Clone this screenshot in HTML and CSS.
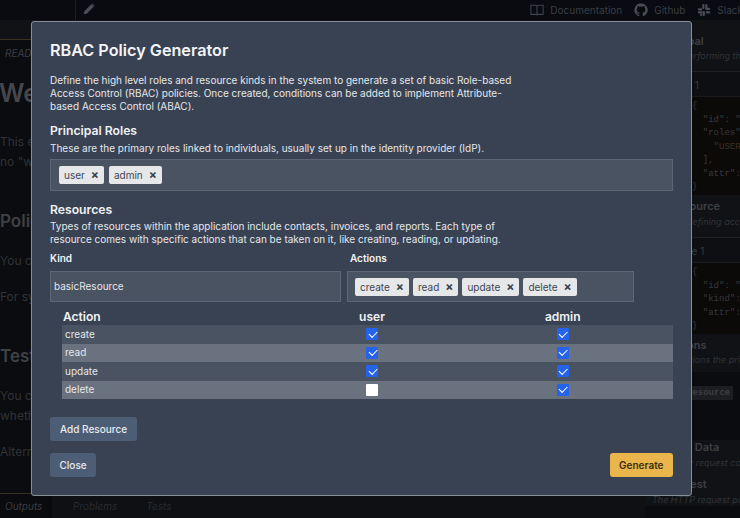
FILE: index.html
```html
<!DOCTYPE html>
<html lang="en">
<head>
<meta charset="utf-8">
<title>RBAC Policy Generator</title>
<link rel="stylesheet" href="styles.css">
</head>
<body>
<div class="app">
  <header class="topbar">
    <div class="brand"></div>
    <svg class="pencil" viewBox="0 0 24 24" width="14" height="14"><path d="M3 21l1-5L16 4l4 4L8 20z M17.500 2.500l4 4-1 1-4-4z" fill="#4b4e54"/></svg>
    <nav class="toplinks">
      <span class="toplink"><svg viewBox="0 0 16 16" width="14" height="14" fill="none" stroke="#3f434a" stroke-width="1.200"><path d="M1 2.500h5.500q1.500 0 1.500 1.500v10q0-1-1.500-1H1zM15 2.500H9.500Q8 2.500 8 4v10q0-1 1.500-1H15z"/></svg>Documentation</span>
      <span class="toplink"><svg viewBox="0 0 16 16" width="14" height="14" fill="#4a4d53"><path d="M8 .5a7.500 7.500 0 0 0-2.400 14.600c.4.100.5-.2.500-.4v-1.300c-2.100.5-2.500-1-2.500-1-.3-.9-.8-1.100-.8-1.100-.7-.5.100-.5.100-.5.700.1 1.100.8 1.100.8.700 1.100 1.700.8 2.100.6.100-.5.300-.8.500-1-1.700-.2-3.400-.8-3.400-3.700 0-.8.300-1.500.8-2-.1-.2-.3-1 .1-2 0 0 .6-.2 2.100.8a7 7 0 0 1 3.800 0c1.500-1 2.100-.8 2.100-.8.400 1 .2 1.800.1 2 .5.500.8 1.200.8 2 0 2.900-1.800 3.500-3.400 3.700.3.200.5.700.5 1.400v2.100c0 .2.100.5.500.4A7.500 7.500 0 0 0 8 .5z"/></svg>Github</span>
      <span class="toplink"><svg viewBox="0 0 16 16" width="14" height="14" fill="#4a4d53"><rect x="6" y="1" width="2.500" height="6" rx="1.200"/><rect x="1" y="6" width="5" height="2.500" rx="1.200"/><rect x="9.500" y="1" width="2.500" height="6" rx="1.200"/><rect x="9.500" y="5.500" width="5.500" height="2.500" rx="1.200"/><rect x="1" y="9.500" width="5.500" height="2.500" rx="1.200"/><rect x="6.500" y="9" width="2.500" height="6" rx="1.200"/><rect x="10" y="9.500" width="5" height="2.500" rx="1.200"/><rect x="3.500" y="12" width="2.500" height="3" rx="1.200"/></svg>Slack</span>
    </nav>
  </header>
  <div class="workspace">
    <main class="readme">
      <div class="tabline"></div>
      <div class="readlabel"><i>READ</i></div>
      <div class="doc">
        <h1>Welcome</h1>
        <p class="tight">This example</p>
        <p>no "workflow"</p>
        <h2>Policies</h2>
        <p>You can</p>
        <p>For syntax</p>
        <h2>Tests</h2>
        <p class="tight">You can</p>
        <p>whether</p>
        <p>Alternatively</p>
      </div>
      <div class="outtabs"><i class="on">Outputs</i><i class="tb">Problems</i><i class="tb">Tests</i></div>
    </main>
    <aside class="side">
      <section class="sect s-principal"><b>Principal</b><i>One performing the</i></section>
      <div class="subhead">Principal 1</div>
      <pre class="code">{
  "id": "1",
  "roles": [
    <em>"USER"</em>
  ],
  "attr": {}
}</pre>
      <section class="sect s-resource"><b>Resource</b><i>Item defining access</i></section>
      <div class="subhead">Resource 1</div>
      <pre class="code">{
  "id": "1",
  "kind": "a",
  "attr": {}
}</pre>
      <section class="sect s-actions"><b>Actions</b><i>The actions the principal</i></section>
      <div class="codechip"><code>basicResource</code></div>
      <section class="sect s-aux"><b>Aux Data</b><i>Auxiliary request context</i></section>
      <section class="sect s-request"><b>Request</b><i>The HTTP request payload</i></section>
    </aside>
  </div>
</div>

<div class="modal" role="dialog">
  <h3 class="title">RBAC Policy Generator</h3>
  <p class="text intro">Define the high level roles and resource kinds in the system to generate a set of basic Role-based Access Control (RBAC) policies. Once created, conditions can be added to implement Attribute-based Access Control (ABAC).</p>
  <h4 class="heading">Principal Roles</h4>
  <p class="text roles-note">These are the primary roles linked to individuals, usually set up in the identity provider (IdP).</p>
  <div class="tagbox roles">
    <span class="tag">user<span class="x">×</span></span>
    <span class="tag">admin<span class="x">×</span></span>
  </div>
  <h4 class="heading res">Resources</h4>
  <p class="text res-note">Types of resources within the application include contacts, invoices, and reports. Each type of resource comes with specific actions that can be taken on it, like creating, reading, or updating.</p>
  <div class="fields">
    <div class="kind">
      <label class="lbl">Kind</label>
      <div class="input">basicResource</div>
    </div>
    <div class="actions">
      <label class="lbl">Actions</label>
      <div class="tagbox acts">
        <span class="tag">create<span class="x">×</span></span>
        <span class="tag">read<span class="x">×</span></span>
        <span class="tag">update<span class="x">×</span></span>
        <span class="tag">delete<span class="x">×</span></span>
      </div>
    </div>
  </div>
  <table class="matrix">
    <thead><tr><th class="col-a">Action</th><th class="col-u">user</th><th>admin</th></tr></thead>
    <tbody>
      <tr><td>create</td><td><span class="cb on"></span></td><td><span class="cb on"></span></td></tr>
      <tr><td>read</td><td><span class="cb on"></span></td><td><span class="cb on"></span></td></tr>
      <tr><td>update</td><td><span class="cb on"></span></td><td><span class="cb on"></span></td></tr>
      <tr><td>delete</td><td><span class="cb"></span></td><td><span class="cb on"></span></td></tr>
    </tbody>
  </table>
  <button class="btn add">Add Resource</button>
  <div class="foot">
    <button class="btn">Close</button>
    <button class="btn gen">Generate</button>
  </div>
</div>
</body>
</html>
```
FILE: styles.css
```css
* { box-sizing: border-box; }
html, body { margin: 0; height: 100%; }
body { background: #0b0d12; font-family: Inter, "Liberation Sans", sans-serif; overflow: hidden; position: relative; width: 740px; height: 518px; }

.app { width: 740px; height: 518px; display: flex; flex-direction: column; color: #44474d; overflow: hidden; }
.topbar { height: 20px; display: flex; align-items: center; flex: none; background: #090b10; }
.brand { width: 76px; height: 20px; border-right: 1px solid #1c1e23; }
.pencil { margin-left: 6px; margin-top: -2px; }
.toplinks { margin-left: auto; display: flex; gap: 12px; margin-right: -3px; font-size: 10px; color: #3a3e45; }
.toplink { display: flex; align-items: center; gap: 6px; }

.workspace { flex: 1; display: flex; min-height: 0; }
.readme { width: 645px; flex: none; display: flex; flex-direction: column; background: #0b0c10; }
.tabline { height: 20px; flex: none; background: #101216; border-bottom: 1px solid #3a3220; }
.readlabel { margin-top: 7px; font-size: 10px; line-height: 13px; color: #3b3d42; padding-left: 5px; flex: none; }
.doc { flex: 1; white-space: nowrap; overflow: hidden; min-height: 0; }
.doc h1 { margin: 18px 0 24px -1px; font-size: 25px; line-height: 30px; font-weight: 600; color: #45474c; }
.doc h2 { margin: 37px 0 18px; font-size: 17px; line-height: 24px; font-weight: 600; color: #3f4146; }
.doc p { margin: 0 0 16px; font-size: 12px; line-height: 20px; color: #303237; }
.doc p.tight { margin-bottom: 0; }
.outtabs { height: 25px; display: flex; flex: none; border-top: 1px solid #3a3220; font-size: 10px; align-items: center; color: #292b30; background: #0e1014; }
.outtabs .on { width: 52px; padding-left: 5px; color: #3a3c41; background: #0a0b0f; height: 100%; display: flex; align-items: center; }
.outtabs .tb { padding-left: 21px; padding-right: 8px; }

.side { flex: 1; min-width: 0; white-space: nowrap; overflow: hidden; background: #0b0c10; }
.sect { padding-left: 15px; background: #101216; }
.sect b { display: block; font-size: 11px; line-height: 14px; color: #3d3f44; font-weight: 600; }
.sect i { display: block; font-size: 9px; line-height: 12px; color: #303237; }
.s-principal { padding: 14px 0 9px 18px; }
.s-principal b { margin-left: -6px; }
.s-principal i, .s-actions i { margin-top: 2px; }
.s-resource { padding: 4.500px 0 9px 21px; }
.s-resource b { margin-left: 4px; }
.s-resource i, .s-request i { margin-top: 3px; }
.s-actions { padding-top: 4px; padding-bottom: 6px; }
.s-actions b { margin-left: 6px; }
.s-aux { margin-top: 47px; padding-left: 11px; padding-bottom: 8px; }
.s-aux b { margin-left: 15px; }
.s-aux i { margin-top: 3px; }
.s-request { padding-left: 7px; }
.s-request b { margin-left: 11px; }
.subhead { font-size: 10px; line-height: 26px; height: 26px; color: #383a3f; padding-left: 6px; border-top: 1px solid #1e2024; border-bottom: 1px solid #1a1c20; background: #0d0f13; }
.s-resource + .subhead { padding-left: 8px; }
.code { margin: 0; font: 9px/13.500px "Liberation Mono", monospace; color: #36383c; background: #0c0a09; padding: 3px 0 0 47px; }
.code em { font-style: normal; color: #3f2e22; }
.codechip { padding-top: 7px; height: 21px; padding-left: 12px; }
.codechip code { display: inline-block; font: 700 9px/14px "Liberation Mono", monospace; color: #3c3e43; background: #1c1e22; padding: 0 3px; }

.modal { position: absolute; left: 31px; top: 21px; width: 661px; height: 475px; background: #394252; border: 1px solid #868d97; border-radius: 3px; padding: 18px 18px 18px; color: #e5e7eb; }
.title { margin: 0; font-size: 16.200px; line-height: 20px; font-weight: 600; color: #f3f4f6; }
.text { margin: 0; font-size: 10px; line-height: 13px; color: #e5e7eb; }
.intro { margin-top: 14px; width: 470px; }
.heading { margin: 0; font-size: 12.200px; line-height: 15px; font-weight: 600; color: #f1f2f4; }
.roles-note { margin-top: 4px; }
.intro + .heading { margin-top: 10px; }
.tagbox { display: flex; align-items: center; gap: 4px; background: #4a5362; border: 1px solid #5d6675; padding-left: 7px; }
.roles { height: 32px; margin-top: 4px; padding-left: 8px; gap: 5px; }
.tag { display: inline-flex; align-items: center; justify-content: space-between; height: 18px; background: #e6e7e9; color: #3f4654; border-radius: 2px; font-size: 10px; padding: 0 5px; gap: 6px; }
.x { font-size: 12px; font-weight: 700; color: #39414f; line-height: 1; }
.res { margin-top: 11px; }
.res-note { margin-top: 3px; width: 470px; }
.fields { display: flex; gap: 6px; margin-top: 6px; }
.kind { width: 291px; }
.actions { width: 287px; }
.lbl { display: block; font-size: 10px; line-height: 13px; font-weight: 600; color: #f1f2f4; margin-bottom: 6px; }
.actions .lbl { padding-left: 3px; }
.input { height: 31px; background: #4a5362; border: 1px solid #5d6675; font-size: 10px; line-height: 29px; padding-left: 3px; color: #e5e7eb; }
.acts { height: 31px; padding-left: 7px; }
.matrix { margin: 6px 0 0 12px; width: 611px; border-collapse: collapse; table-layout: fixed; font-size: 10px; }
.matrix th { height: 17px; font-size: 12px; font-weight: 600; color: #f1f2f4; padding: 0; }
.matrix th.col-a { text-align: left; padding-left: 1px; width: 229.500px; }
.matrix th.col-u { width: 161px; }
.matrix td { height: 18.500px; padding: 0; text-align: center; line-height: 0; }
.matrix td:first-child { text-align: left; padding-left: 3px; line-height: 13px; }
.matrix tbody tr { background: #4a5362; }
.matrix tbody tr:nth-child(even) { background: #6a7280; }
.cb { display: inline-block; width: 12px; height: 12px; background: #fff; border-radius: 1px; vertical-align: middle; }
.cb.on { background: #2563eb; position: relative; }
.cb.on::after { content: ""; position: absolute; left: 2.500px; top: 2.500px; width: 7px; height: 3.500px; border-left: 1.500px solid #fff; border-bottom: 1.500px solid #fff; transform: rotate(-45deg); }
.btn { display: inline-block; font: 500 10px Inter, sans-serif; height: 24px; padding: 0 9.500px; background: #4e5d76; color: #e8eaee; border: 0; border-radius: 3px; }
.add { margin-top: 18px; display: block; padding: 0 10px; }
.foot { display: flex; justify-content: space-between; margin-top: 12px; }
.gen { background: #eab54a; color: #3a2e12; font-weight: 600; }
```
